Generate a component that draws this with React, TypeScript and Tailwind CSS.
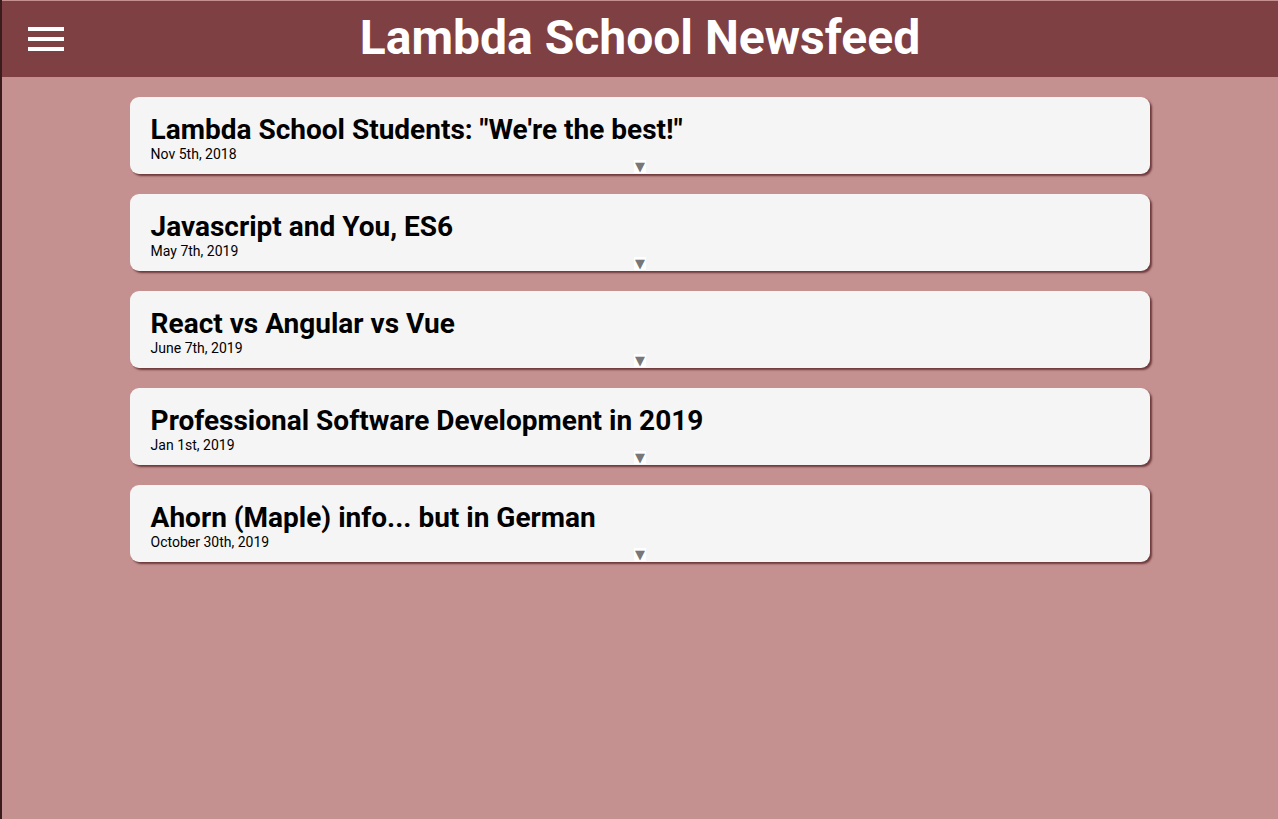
const articles = [
  { title: 'Lambda School Students: "We\'re the best!"', date: 'Nov 5th, 2018' },
  { title: 'Javascript and You, ES6', date: 'May 7th, 2019' },
  { title: 'React vs Angular vs Vue', date: 'June 7th, 2019' },
  { title: 'Professional Software Development in 2019', date: 'Jan 1st, 2019' },
  { title: 'Ahorn (Maple) info... but in German', date: 'October 30th, 2019' },
];

function Article({ title, date }: { title: string; date: string }) {
  return (
    <div className="relative rounded-[9px] bg-[#f5f5f5] pl-[21px] pr-5 pt-[17px] pb-[12px] shadow-[2px_2px_2px_#6e3a3c]">
      <h2 className="text-[28px] font-bold leading-[32px] text-black">{title}</h2>
      <p className="pt-px text-[14px] leading-[15px] text-black">{date}</p>
      <span className="absolute bottom-px left-1/2 w-[12px] -translate-x-1/2 bg-white text-center font-['DejaVu_Sans',sans-serif] text-[13px] leading-[13px] text-[#777]">
        ▼
      </span>
    </div>
  );
}

export default function App() {
  return (
    <div className="min-h-[819px] border-l-2 border-[#3b1c1c] bg-[#c49090] pt-px font-['Roboto',sans-serif]">
      <header className="grid h-[76px] grid-cols-[1fr_auto_1fr] items-center bg-[#7f4044]">
        <div className="flex flex-col gap-[6px] pl-[26px]">
          <span className="h-[4px] w-[36px] bg-white" />
          <span className="h-[4px] w-[36px] bg-white" />
          <span className="h-[4px] w-[36px] bg-white" />
        </div>
        <h1 className="pb-[3px] text-[48px] font-bold leading-none text-white">Lambda School Newsfeed</h1>
        <div />
      </header>

      <main className="mx-auto mt-5 flex w-4/5 flex-col gap-[20px]">
        {articles.map(a => (
          <Article key={a.title} title={a.title} date={a.date} />
        ))}
      </main>
    </div>
  );
}
